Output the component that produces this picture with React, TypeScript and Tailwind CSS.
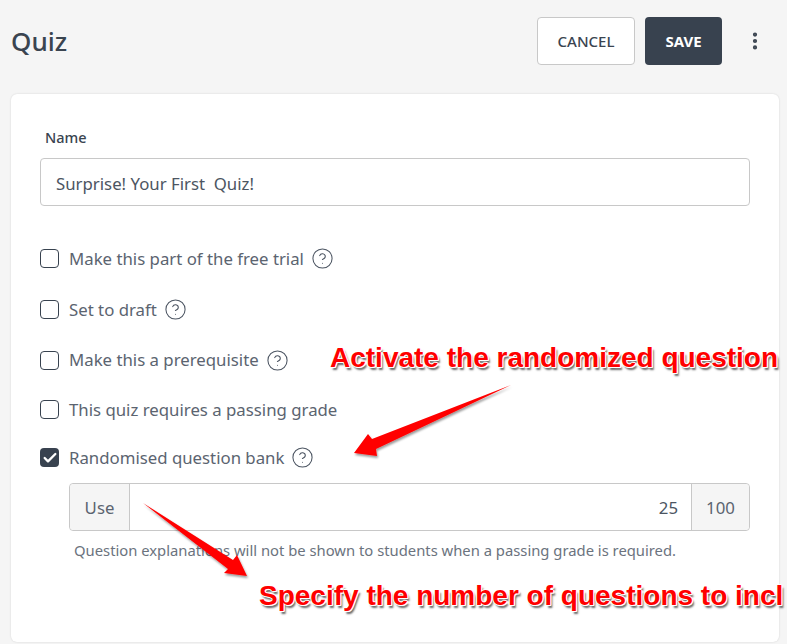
import React from 'react';
import { Check, CircleHelp, EllipsisVertical } from 'lucide-react';

const rows = [
  { label: 'Make this part of the free trial', help: true, cls: 'h-[51px]' },
  { label: 'Set to draft', help: true, cls: 'h-[51px]' },
  { label: 'Make this a prerequisite', help: true, cls: 'h-[50px]' },
  { label: 'This quiz requires a passing grade', help: false, cls: 'h-[49px]' },
  { label: 'Randomised question bank', help: true, checked: true, cls: 'h-[47px]' },
];

const calloutText =
  "absolute whitespace-nowrap font-['Liberation_Sans',Arial,sans-serif] font-bold text-[28px] leading-none text-[#ff0000] [text-shadow:1px_0_0_#fff,-1px_0_0_#fff,0_1px_0_#fff,0_-1px_0_#fff,1px_1px_0_#fff,2px_3px_2px_#666]";

const App: React.FC = () => {
  return (
    <div className="relative h-[644px] w-[787px] overflow-hidden bg-[#f5f5f5] font-['Noto_Sans',sans-serif] text-[#3a4450]">
      <header className="flex h-[94px] items-center pb-[12px] pl-[11px]">
        <h1 className="text-[26px] font-medium leading-none">Quiz</h1>
        <div className="ml-auto flex items-center gap-[10px]">
          <button className="h-[48px] w-[98px] rounded border border-[#c8c8c8] bg-white text-[15px] font-medium text-[#3a4450]">CANCEL</button>
          <button className="h-[48px] w-[77px] rounded bg-[#38424f] text-[15px] font-bold text-white">SAVE</button>
        </div>
        <div className="ml-[21px] mr-[20px] flex w-[24px] justify-center">
          <EllipsisVertical size={22} strokeWidth={2.6} />
        </div>
      </header>

      <main className="ml-[11px] mr-[8px] h-[548px] rounded-md bg-white pl-[29px] pr-[29px] pt-[33px] shadow-[0_0_2px_rgba(0,0,0,0.15)]">
        <label className="ml-[5px] block text-[14.5px] font-medium leading-[20px]">Name</label>
        <div className="mt-[11px] flex h-[48px] items-center rounded border border-[#c8c8c8] px-[15px] pt-[3px] text-[16.8px] text-[#4c5562]">
          Surprise! Your First&nbsp; Quiz!
        </div>

        <div className="mt-[27px]">
          {rows.map(row => (
            <div key={row.label} className={`flex items-center ${row.cls}`}>
              {row.checked ? (
                <span className="flex h-[19px] w-[19px] items-center justify-center rounded-[4px] bg-[#38424f] text-white">
                  <Check size={16} strokeWidth={3.5} />
                </span>
              ) : (
                <span className="h-[19px] w-[19px] rounded-[4px] border border-[#38424f] bg-white" />
              )}
              <span className="ml-[10px] text-[16.8px] text-[#5b6470]">{row.label}</span>
              {row.help && <CircleHelp size={23} strokeWidth={1.1} className="ml-[7px] text-[#4c5562]" />}
            </div>
          ))}
        </div>

        <div className="ml-[29px] mt-[2px] flex h-[48px] rounded border border-[#c8c8c8] pt-0 text-[16.8px]">
          <div className="flex w-[60px] items-center justify-center rounded-l border-r border-[#c8c8c8] bg-[#f5f5f5] pt-[2px] text-[#5b6470]">Use</div>
          <div className="flex flex-1 items-center justify-end pr-[13px] pt-[2px] text-[#4c5562]">25</div>
          <div className="flex w-[58px] items-center justify-center rounded-r border-l border-[#c8c8c8] bg-[#f5f5f5] pt-[2px] text-[#5b6470]">100</div>
        </div>
        <p className="ml-[34px] mt-[9px] whitespace-nowrap text-[14.8px] leading-[20px] text-[#6b737e]">
          Question explanations will not be shown to students when a passing grade is required.
        </p>
      </main>

      {/* callouts drawn over the form */}
      <div className={`${calloutText} left-[330px] top-[344px]`}>Activate the randomized question</div>
      <div className={`${calloutText} left-[259px] top-[582px]`}>Specify the number of questions to incl</div>
      <svg className="absolute left-0 top-0" width="787" height="644" viewBox="0 0 787 644">
        <defs>
          <filter id="arrow-shadow" x="-20%" y="-20%" width="140%" height="140%">
            <feDropShadow dx="1" dy="2" stdDeviation="1.2" floodColor="#000" floodOpacity="0.4" />
          </filter>
        </defs>
        <path d="M511 385 L372 439 L368 434 L354 453 L377 456 L376 449 Z" fill="#ff0000" filter="url(#arrow-shadow)" />
        <path d="M143 503 L233 560 L237 555 L247 576 L224 573 L228 569 Z" fill="#ff0000" filter="url(#arrow-shadow)" />
      </svg>
    </div>
  );
};

export default App;
